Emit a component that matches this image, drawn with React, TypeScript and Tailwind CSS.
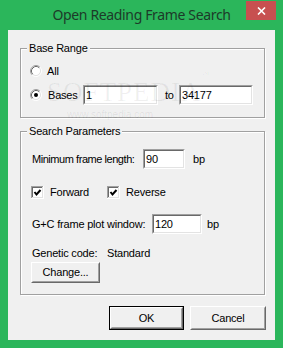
import React from 'react';

const Radio = ({ checked }: { checked?: boolean }) => (
  <svg width="12" height="12" viewBox="0 0 12 12" className="shrink-0">
    <circle cx="6" cy="6" r="4.5" fill="#fff" />
    <path d="M2.11 9.89 A5.5 5.5 0 0 1 9.89 2.11" fill="none" stroke="#a0a0a0" strokeWidth="1" />
    <path d="M9.89 2.11 A5.5 5.5 0 0 1 2.11 9.89" fill="none" stroke="#fff" strokeWidth="1" />
    <path d="M2.82 9.18 A4.5 4.5 0 0 1 9.18 2.82" fill="none" stroke="#696969" strokeWidth="1" />
    <path d="M9.18 2.82 A4.5 4.5 0 0 1 2.82 9.18" fill="none" stroke="#e3e3e3" strokeWidth="1" />
    {checked && <circle cx="6" cy="6" r="2" fill="#000" />}
  </svg>
);

const Checkbox = ({ label }: { label: string }) => (
  <div className="flex items-center h-[16px]">
    <svg width="13" height="13" viewBox="0 0 13 13" className="shrink-0" shapeRendering="crispEdges">
      <rect x="0" y="0" width="13" height="13" fill="#fff" />
      <path d="M0 0.5 H12.5 M0.5 0 V13" stroke="#a0a0a0" />
      <path d="M0 12.5 H13 M12.5 0 V13" stroke="#fff" />
      <path d="M1 1.5 H11.5 M1.5 1 V12" stroke="#696969" />
      <path d="M1 11.5 H12 M11.5 1 V12" stroke="#e3e3e3" />
      <polyline points="3.5,6 5.5,8.5 9.5,4" fill="none" stroke="#000" strokeWidth="2" shapeRendering="auto" />
    </svg>
    <span className="ml-[6px]">{label}</span>
  </div>
);

const Field = ({ value, width }: { value: string; width: string }) => (
  <div className={`${width} shrink-0 h-[20px] border border-t-[#a0a0a0] border-l-[#a0a0a0] border-b-white border-r-white`}>
    <div className="h-full border border-t-[#696969] border-l-[#696969] border-b-[#e3e3e3] border-r-[#e3e3e3] bg-white pl-[1px] leading-[16px]">
      {value}
    </div>
  </div>
);

const Button = ({ label, isDefault, className }: { label: string; isDefault?: boolean; className: string }) => (
  <div className={`${className} ${isDefault ? 'border border-black' : ''}`}>
    <div className="h-full border border-t-white border-l-white border-b-[#696969] border-r-[#696969]">
      <div className="h-full border border-t-[#f0f0f0] border-l-[#f0f0f0] border-b-[#a0a0a0] border-r-[#a0a0a0] bg-[#f0f0f0] flex items-center justify-center">
        {label}
      </div>
    </div>
  </div>
);

const Group = ({ title, height, children }: { title: string; height: string; children: React.ReactNode }) => (
  <div className={`relative ${height} border border-[#a0a0a0] shadow-[inset_1px_1px_0_#fff,1px_1px_0_#fff]`}>
    <span className="absolute left-[6px] -top-[7px] px-[2px] leading-[13px] bg-[#f0f0f0]">{title}</span>
    {children}
  </div>
);

export default function App() {
  return (
    <div className="w-[283px] h-[348px] bg-[#2bb65b] flex flex-col font-['Liberation_Sans',Arial,sans-serif] text-[11px] leading-[13px] tracking-[-0.2px] whitespace-nowrap text-black">
      {/* title bar */}
      <div className="relative h-[30px] shrink-0 flex items-center justify-center">
        <span className="font-['Noto_Sans',sans-serif] text-[14px] tracking-[-0.35px] text-[#1d3a29] leading-none -mt-[1px]">
          Open Reading Frame Search
        </span>
        <div className="absolute right-[7px] top-[1px] w-[30px] h-[19px] bg-[#c75050] flex items-center justify-center">
          <svg width="9" height="8" viewBox="0 0 9 8">
            <path d="M1 0.5 L8 7.5 M8 0.5 L1 7.5" stroke="#fff" strokeWidth="1.6" />
          </svg>
        </div>
      </div>

      {/* client area */}
      <div className="relative flex-1 mx-[8px] mb-[8px] bg-[#f0f0f0] flex flex-col pt-[18px] pl-[12px] pr-[10px]">
        <Group title="Base Range" height="h-[70px]">
          <div className="flex flex-col pl-[9px] pt-[14px]">
            <div className="flex items-center h-[16px]">
              <Radio />
              <span className="ml-[5px]">All</span>
            </div>
            <div className="flex items-center h-[20px] mt-[6px]">
              <Radio checked />
              <span className="ml-[6px] w-[35px]">Bases</span>
              <Field value="1" width="w-[75px]" />
              <span className="ml-[7px] w-[14px]">to</span>
              <Field value="34177" width="w-[74px]" />
            </div>
          </div>
        </Group>

        <div className="mt-[13px]">
          <Group title="Search Parameters" height="h-[164px]">
            <div className="flex flex-col pl-[10px] pt-[17px]">
              <div className="flex items-center h-[20px] pl-[1px]">
                <span className="w-[111px] shrink-0 tracking-[-0.45px]">Minimum frame length:</span>
                <Field value="90" width="w-[42px]" />
                <span className="ml-[8px]">bp</span>
              </div>
              <div className="flex items-center mt-[15px]">
                <div className="w-[76px]">
                  <Checkbox label="Forward" />
                </div>
                <Checkbox label="Reverse" />
              </div>
              <div className="flex items-center h-[20px] mt-[14px] pl-[1px]">
                <span className="w-[120px] shrink-0">G+C frame plot window:</span>
                <Field value="120" width="w-[50px]" />
                <span className="ml-[5px]">bp</span>
              </div>
              <div className="flex h-[13px] mt-[13px] pl-[1px]">
                <span className="w-[75px]">Genetic code:</span>
                <span>Standard</span>
              </div>
              <div className="mt-[2px]">
                <Button label="Change..." className="w-[69px] h-[21px]" />
              </div>
            </div>
          </Group>
        </div>

        <div className="flex justify-end gap-[6px] mt-[11px] -mr-px">
          <Button label="OK" isDefault className="w-[75px] h-[24px]" />
          <Button label="Cancel" className="w-[76px] h-[24px]" />
        </div>

        {/* watermark */}
        <div className="absolute left-[39px] top-[49px] pointer-events-none select-none text-black/[0.06] font-['Liberation_Serif',serif] text-[27px] leading-none tracking-[1px]">
          SOFTPEDIA<sup className="text-[8px] align-top">™</sup>
        </div>
        <div className="absolute left-[59px] top-[80px] pointer-events-none select-none text-black/[0.08] text-[10px] leading-none tracking-normal">
          www.softpedia.com
        </div>
      </div>
    </div>
  );
}
